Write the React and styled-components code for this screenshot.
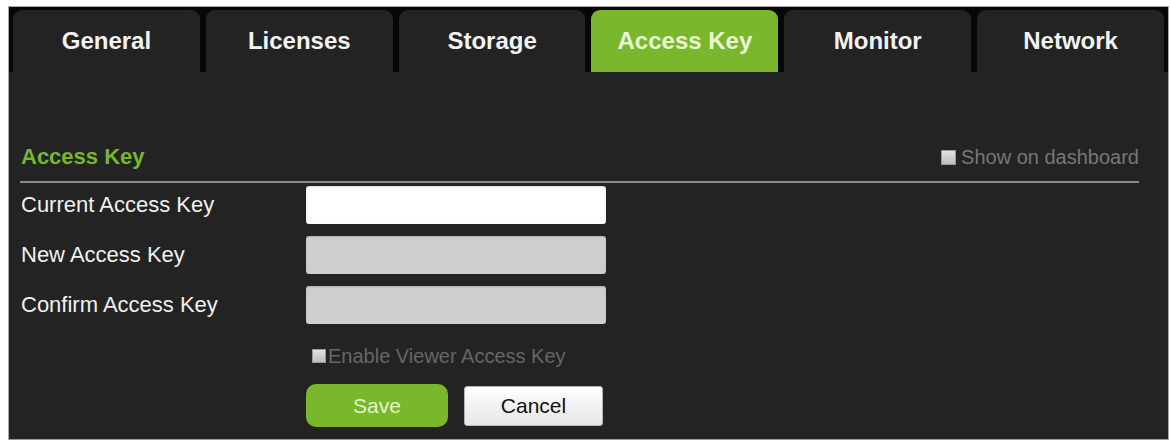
import styled, { createGlobalStyle } from 'styled-components';

const GlobalStyle = createGlobalStyle`
  html, body {
    margin: 0;
    background: #ffffff;
    font-family: "Liberation Sans", Arial, sans-serif;
  }
`;

const tabs = ['General', 'Licenses', 'Storage', 'Access Key', 'Monitor', 'Network'];
const fields = [
  { label: 'Current Access Key', enabled: true },
  { label: 'New Access Key', enabled: false },
  { label: 'Confirm Access Key', enabled: false },
];

function App() {
  return (
    <Page>
      <GlobalStyle />
      <Panel>
        <TabBar>
          {tabs.map(t => (
            <Tab key={t} $active={t === 'Access Key'}>{t}</Tab>
          ))}
        </TabBar>
        <Content>
          <SectionHead>
            <SectionTitle>Access Key</SectionTitle>
            <CheckLabel $size={20} $gap={5} $color="#777">
              <Box $size={15} />
              Show on dashboard
            </CheckLabel>
          </SectionHead>
          <Form>
            {fields.map(f => (
              <Row key={f.label}>
                <Label>{f.label}</Label>
                <Field $enabled={f.enabled} />
              </Row>
            ))}
          </Form>
          <Options>
            <CheckLabel $size={20} $gap={2} $color="#666">
              <Box $size={14} />
              Enable Viewer Access Key
            </CheckLabel>
          </Options>
          <Actions>
            <SaveButton>Save</SaveButton>
            <CancelButton>Cancel</CancelButton>
          </Actions>
        </Content>
      </Panel>
    </Page>
  );
}
export default App;

const Page = styled.div`
  padding: 6px 2px 0 8px;
`;

const Panel = styled.div`
  background: #232323;
  border: 1px solid #a9a9a9;
  border-bottom-color: #9a9a9a;
`;

const TabBar = styled.div`
  display: flex;
  gap: 6px;
  height: 65px;
  padding: 3px 4px 0 4px;
  box-sizing: border-box;
  background: #070707;
`;

const Tab = styled.div`
  flex: 1;
  display: flex;
  align-items: center;
  justify-content: center;
  border-radius: 9px 9px 0 0;
  background: ${p => (p.$active ? '#7ab72c' : '#232323')};
  color: ${p => (p.$active ? '#eaf6d6' : '#f2f2f2')};
  font-size: 24px;
  font-weight: bold;
`;

const Content = styled.div`
  padding: 70px 29px 12px 11px;
`;

const SectionHead = styled.div`
  display: flex;
  align-items: center;
  justify-content: space-between;
  height: 30px;
  padding-bottom: 9px;
  border-bottom: 2px solid #8a8a8a;
`;

const SectionTitle = styled.div`
  color: #78b62d;
  font-size: 22px;
  font-weight: bold;
  padding-left: 1px;
`;

const CheckLabel = styled.label`
  display: flex;
  align-items: center;
  gap: ${p => p.$gap}px;
  color: ${p => p.$color};
  font-size: ${p => p.$size}px;
`;

const Box = styled.span`
  display: inline-block;
  width: ${p => p.$size}px;
  height: ${p => p.$size}px;
  background: linear-gradient(#e2e2e2, #bdbdbd);
  border: 1px solid #999;
  box-sizing: border-box;
`;

const Form = styled.div`
  display: grid;
  row-gap: 12px;
  padding-top: 3px;
`;

const Row = styled.div`
  display: grid;
  grid-template-columns: 286px 300px;
  align-items: center;
`;

const Label = styled.div`
  color: #f0f0f0;
  font-size: 22px;
  padding-left: 1px;
`;

const Field = styled.div`
  height: 38px;
  border-radius: 3px;
  background: ${p => (p.$enabled ? '#ffffff' : '#cfcfcf')};
  box-shadow: inset 0 1px 2px rgba(0, 0, 0, 0.15);
`;

const Options = styled.div`
  margin-top: 20px;
  padding-left: 292px;
  height: 24px;
  display: flex;
  align-items: center;
`;

const Actions = styled.div`
  display: flex;
  align-items: center;
  gap: 16px;
  margin-top: 16px;
  padding-left: 286px;
`;

const SaveButton = styled.button`
  width: 142px;
  height: 43px;
  border: none;
  border-radius: 10px;
  background: #79b72b;
  color: #e4f3cd;
  font-family: inherit;
  font-size: 21px;
`;

const CancelButton = styled.button`
  width: 139px;
  height: 40px;
  border: 1px solid #b5b5b5;
  border-radius: 3px;
  background: linear-gradient(#ffffff, #e6e6e6);
  color: #111;
  font-family: inherit;
  font-size: 21px;
`;
